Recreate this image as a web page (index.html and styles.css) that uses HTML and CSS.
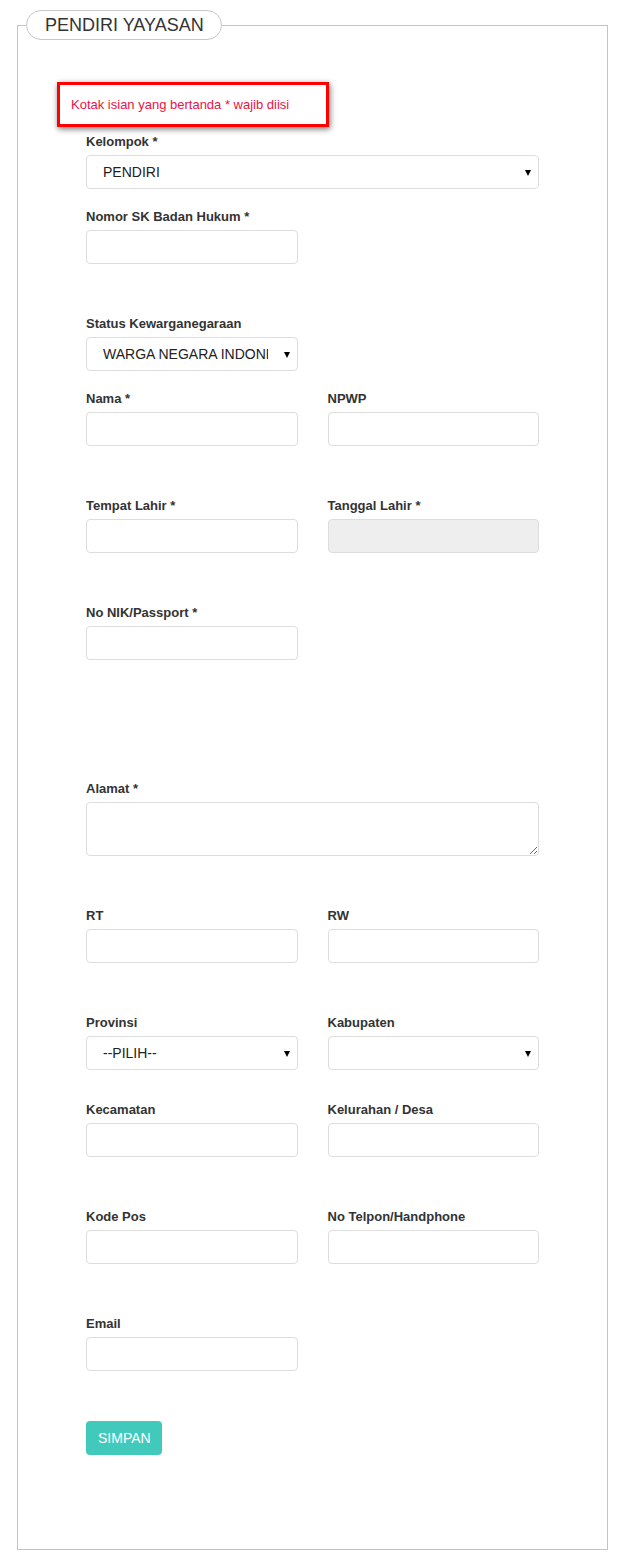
FILE: index.html
```html
<!DOCTYPE html>
<html lang="id">
<head>
<meta charset="utf-8">
<title>Pendiri Yayasan</title>
<link rel="stylesheet" href="styles.css">
</head>
<body>
<fieldset class="panel">
  <legend class="panel-title">PENDIRI YAYASAN</legend>
  <div class="panel-body">
    <div class="notice">Kotak isian yang bertanda * wajib diisi</div>

    <div class="field mt-5">
      <label class="label">Kelompok *</label>
      <div class="select-wrap"><select class="control"><option>PENDIRI</option></select></div>
    </div>

    <div class="row mt-18">
      <div class="field">
        <label class="label">Nomor SK Badan Hukum *</label>
        <input class="control" type="text">
      </div>
    </div>

    <div class="row mt-50">
      <div class="field">
        <label class="label">Status Kewarganegaraan</label>
        <div class="select-wrap"><select class="control"><option>WARGA NEGARA INDONESIA</option></select></div>
      </div>
    </div>

    <div class="row mt-18">
      <div class="field">
        <label class="label">Nama *</label>
        <input class="control" type="text">
      </div>
      <div class="field">
        <label class="label">NPWP</label>
        <input class="control" type="text">
      </div>
    </div>

    <div class="row mt-50">
      <div class="field">
        <label class="label">Tempat Lahir *</label>
        <input class="control" type="text">
      </div>
      <div class="field">
        <label class="label">Tanggal Lahir *</label>
        <input class="control control-disabled" type="text" disabled>
      </div>
    </div>

    <div class="row mt-50">
      <div class="field">
        <label class="label">No NIK/Passport *</label>
        <input class="control" type="text">
      </div>
    </div>

    <div class="field mt-119">
      <label class="label">Alamat *</label>
      <textarea class="control control-area"></textarea>
    </div>

    <div class="row mt-50">
      <div class="field">
        <label class="label">RT</label>
        <input class="control" type="text">
      </div>
      <div class="field">
        <label class="label">RW</label>
        <input class="control" type="text">
      </div>
    </div>

    <div class="row mt-50">
      <div class="field">
        <label class="label">Provinsi</label>
        <div class="select-wrap"><select class="control"><option>--PILIH--</option></select></div>
      </div>
      <div class="field">
        <label class="label">Kabupaten</label>
        <div class="select-wrap"><select class="control"><option></option></select></div>
      </div>
    </div>

    <div class="row mt-30">
      <div class="field">
        <label class="label">Kecamatan</label>
        <input class="control" type="text">
      </div>
      <div class="field">
        <label class="label">Kelurahan / Desa</label>
        <input class="control" type="text">
      </div>
    </div>

    <div class="row mt-50">
      <div class="field">
        <label class="label">Kode Pos</label>
        <input class="control" type="text">
      </div>
      <div class="field">
        <label class="label">No Telpon/Handphone</label>
        <input class="control" type="text">
      </div>
    </div>

    <div class="row mt-50">
      <div class="field">
        <label class="label">Email</label>
        <input class="control" type="text">
      </div>
    </div>

    <div class="actions mt-50">
      <button class="btn" type="button">SIMPAN</button>
    </div>
  </div>
</fieldset>
</body>
</html>
```

FILE: styles.css
```css
* { box-sizing: border-box; }

html, body {
  margin: 0;
  background: #fff;
}

body {
  padding: 10px 16px 11px 17px;
  font-family: "Liberation Sans", Arial, sans-serif;
  color: #333;
}

.panel {
  margin: 0;
  padding: 0;
  border: 1px solid #c4c4c4;
  min-width: 0;
}

.panel-title {
  margin-left: 8px;
  padding: 0 17px 0 18px;
  height: 30px;
  line-height: 28px;
  border: 1px solid #c8c8c8;
  border-radius: 15px;
  font-size: 18px;
  color: #333;
  background: #fff;
}

.panel-body {
  padding: 42px 68px 94px 68px;
}

.notice {
  margin-left: -29px;
  width: 272px;
  height: 45px;
  border: 3px solid #f00;
  box-shadow: 1px 2px 6px rgba(0, 0, 0, 0.55);
  padding-left: 11px;
  line-height: 39px;
  font-size: 13px;
  color: #ee1144;
  background: #fff;
}

.row {
  display: grid;
  grid-template-columns: 1fr 1fr;
  column-gap: 30px;
}

.field {
  display: flex;
  flex-direction: column;
}

.label {
  display: block;
  height: 20px;
  line-height: 20px;
  margin-bottom: 3px;
  font-size: 13px;
  font-weight: bold;
  color: #333;
}

.control {
  display: block;
  width: 100%;
  height: 34px;
  margin: 0;
  border: 1px solid #ddd;
  border-radius: 4px;
  background: #fff;
  font-family: "Liberation Sans", Arial, sans-serif;
  font-size: 14px;
  color: #222;
  padding: 0 12px;
  outline: none;
}

.control-disabled {
  background: #eee;
}

.control-area {
  height: 54px;
  resize: vertical;
  padding: 6px 12px;
}

.select-wrap {
  position: relative;
}

.select-wrap .control {
  appearance: none;
  -webkit-appearance: none;
  padding: 0 29px 0 16px;
}

.select-wrap::after {
  content: "";
  position: absolute;
  right: 8px;
  top: 15px;
  width: 0;
  height: 0;
  border-left: 3px solid transparent;
  border-right: 3px solid transparent;
  border-top: 6px solid #000;
  pointer-events: none;
}

.mt-5 { margin-top: 5px; }
.mt-18 { margin-top: 18px; }
.mt-30 { margin-top: 30px; }
.mt-50 { margin-top: 50px; }
.mt-119 { margin-top: 119px; }

.actions {
  display: flex;
}

.btn {
  height: 34px;
  padding: 0 11px 0 12px;
  border: none;
  border-radius: 4px;
  background: #41c9bc;
  color: #fff;
  font-family: "Liberation Sans", Arial, sans-serif;
  font-size: 14px;
}
```
